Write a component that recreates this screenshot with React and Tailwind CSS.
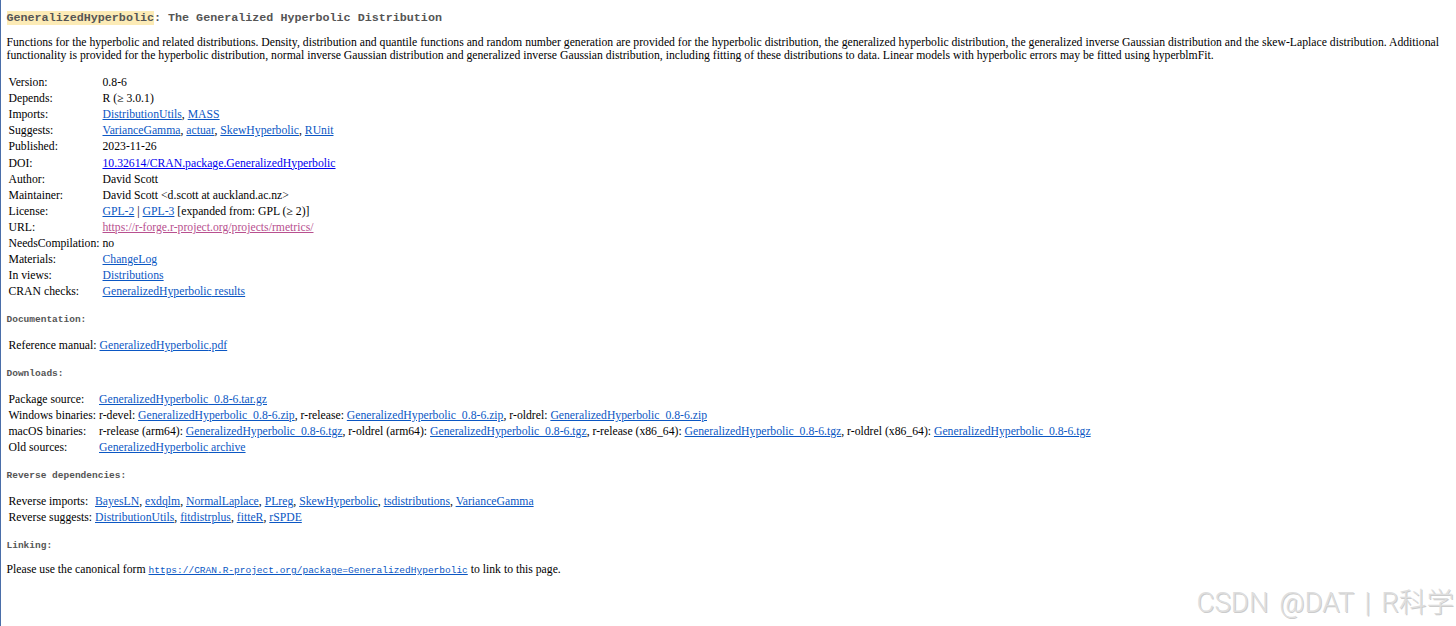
import React from "react";

const NAME = "GeneralizedHyperbolic";

function A({ children, color = "text-[#0b57c4]" }) {
  return (
    <a href="#" className={`underline ${color}`}>
      {children}
    </a>
  );
}

function Links({ items }) {
  return items.map((it, i) => (
    <React.Fragment key={it}>
      {i > 0 && ", "}
      <A>{it}</A>
    </React.Fragment>
  ));
}

function Binaries({ builds, ext }) {
  return builds.map((build, i) => (
    <React.Fragment key={build}>
      {i > 0 && ", "}
      {build}: <A>{`${NAME}_0.8-6.${ext}`}</A>
    </React.Fragment>
  ));
}

function Rows({ rows, labelWidth }) {
  return (
    <dl className="pl-0.5">
      {rows.map(([label, value]) => (
        <div key={label} className="flex h-[16.08px] items-center whitespace-nowrap">
          <dt className={`shrink-0 ${labelWidth}`}>{label}</dt>
          <dd>{value}</dd>
        </div>
      ))}
    </dl>
  );
}

function Heading({ children }) {
  return (
    <h3 className="pt-px font-['Liberation_Mono',monospace] text-[9.5px] leading-3 font-bold text-[#555]">
      {children}
    </h3>
  );
}

const details = [
  ["Version:", "0.8-6"],
  ["Depends:", "R (≥ 3.0.1)"],
  ["Imports:", <Links items={["DistributionUtils", "MASS"]} />],
  ["Suggests:", <Links items={["VarianceGamma", "actuar", "SkewHyperbolic", "RUnit"]} />],
  ["Published:", "2023-11-26"],
  ["DOI:", <A color="text-[#0000ee]">10.32614/CRAN.package.GeneralizedHyperbolic</A>],
  ["Author:", "David Scott"],
  ["Maintainer:", "David Scott <d.scott at auckland.ac.nz>"],
  [
    "License:",
    <>
      <A>GPL-2</A> | <A>GPL-3</A> [expanded from: GPL (≥ 2)]
    </>,
  ],
  ["URL:", <A color="text-[#b8508f]">https://r-forge.r-project.org/projects/rmetrics/</A>],
  ["NeedsCompilation:", "no"],
  ["Materials:", <A>ChangeLog</A>],
  ["In views:", <A>Distributions</A>],
  ["CRAN checks:", <A>{NAME} results</A>],
];

const downloads = [
  ["Package source:", <A>{NAME}_0.8-6.tar.gz</A>],
  ["Windows binaries:", <Binaries builds={["r-devel", "r-release", "r-oldrel"]} ext="zip" />],
  [
    "macOS binaries:",
    <Binaries
      builds={["r-release (arm64)", "r-oldrel (arm64)", "r-release (x86_64)", "r-oldrel (x86_64)"]}
      ext="tgz"
    />,
  ],
  ["Old sources:", <A>{NAME} archive</A>],
];

const reverse = [
  [
    "Reverse imports:",
    <Links
      items={["BayesLN", "exdqlm", "NormalLaplace", "PLreg", "SkewHyperbolic", "tsdistributions", "VarianceGamma"]}
    />,
  ],
  ["Reverse suggests:", <Links items={["DistributionUtils", "fitdistrplus", "fitteR", "rSPDE"]} />],
];

export default function App() {
  return (
    <div className="relative h-[626px] w-[1456px] overflow-hidden border-l border-[#4a6ea9] bg-white pl-[5.5px] font-['Liberation_Serif',serif] text-[11.712px] leading-[13.4px] text-black">
      <h2 className="pt-3 font-['Liberation_Mono',monospace] leading-[13px] font-bold text-[#555]">
        <span className="bg-[#fcebb6]">{NAME}</span>: The Generalized Hyperbolic Distribution
      </h2>

      <p className="mt-[11px] whitespace-nowrap">
        Functions for the hyperbolic and related distributions. Density, distribution and quantile functions and random
        number generation are provided for the hyperbolic distribution, the generalized hyperbolic distribution, the
        generalized inverse Gaussian distribution and the skew-Laplace distribution. Additional
        <br />
        functionality is provided for the hyperbolic distribution, normal inverse Gaussian distribution and generalized
        inverse Gaussian distribution, including fitting of these distributions to data. Linear models with hyperbolic
        errors may be fitted using hyperblmFit.
      </p>

      <div className="mt-3">
        <Rows rows={details} labelWidth="w-[94px]" />
      </div>

      <div className="mt-[13px]">
        <Heading>Documentation:</Heading>
      </div>
      <div className="mt-3">
        <Rows rows={[["Reference manual:", <A>{NAME}.pdf</A>]]} labelWidth="w-[91px]" />
      </div>

      <div className="mt-[13px]">
        <Heading>Downloads:</Heading>
      </div>
      <div className="mt-[11.5px]">
        <Rows rows={downloads} labelWidth="w-[90.5px]" />
      </div>

      <div className="mt-[13px]">
        <Heading>Reverse dependencies:</Heading>
      </div>
      <div className="mt-3">
        <Rows rows={reverse} labelWidth="w-[86.5px]" />
      </div>

      <div className="mt-[13px]">
        <Heading>Linking:</Heading>
      </div>
      <p className="mt-[11px] whitespace-nowrap">
        Please use the canonical form{" "}
        <span className="font-['Liberation_Mono',monospace] text-[9.5px]">
          <A>https://CRAN.R-project.org/package=GeneralizedHyperbolic</A>
        </span>{" "}
        to link to this page.
      </p>

      <div className="absolute right-0.5 bottom-[3px] font-['Roboto','Noto_Sans_CJK_SC',sans-serif] text-[27.6px] leading-10 font-light [word-spacing:4px] whitespace-nowrap text-[#dedede] [text-shadow:1px_1px_0_#cccccc]">
        CSDN @DAT | R科学
      </div>
    </div>
  );
}
